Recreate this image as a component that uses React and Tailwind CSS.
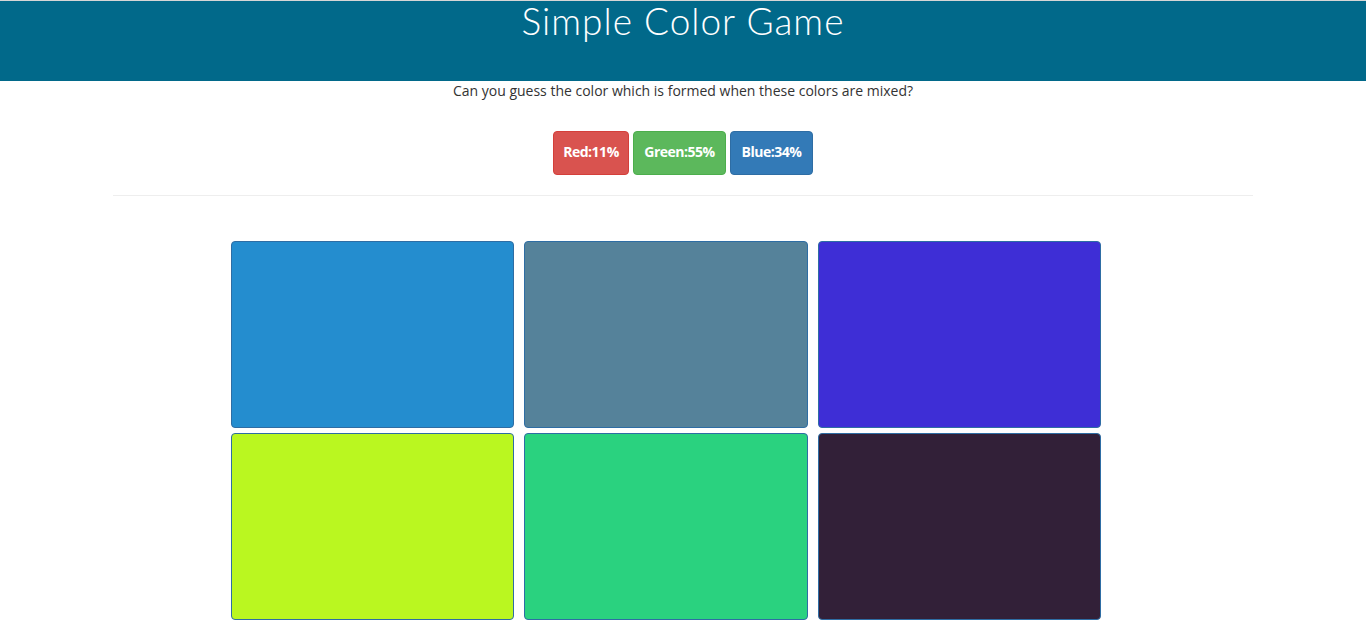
import React from "react";

const mix = [
  { label: "Red:11%", cls: "bg-[#d9534f] border-[#d43f3a] w-[76px]" },
  { label: "Green:55%", cls: "bg-[#5cb85c] border-[#4cae4c] w-[93px]" },
  { label: "Blue:34%", cls: "bg-[#337ab7] border-[#2e6da4] w-[83px]" },
];

const tiles = ["#248dcf", "#55829a", "#3e2ed6", "#baf720", "#2ad27f", "#322038"];

const App = () => {
  return (
    <div className="min-h-screen bg-white" style={{ fontFamily: "'Open Sans', sans-serif" }}>
      {/* Header */}
      <div className="border-t border-[#d6d6d6]">
        <header className="h-[80px] bg-[#01698a] text-center">
          <h1
            className="text-[37px] leading-[40px] font-light tracking-[1px] text-white"
            style={{ fontFamily: "Lato, sans-serif" }}
          >
            Simple Color Game
          </h1>
        </header>
      </div>

      <p className="text-center text-[14px] leading-[20px] text-[#333]">
        Can you guess the color which is formed when these colors are mixed?
      </p>

      {/* Mix buttons */}
      <div className="mt-[30px] flex justify-center gap-[4px]">
        {mix.map((m) => (
          <button
            key={m.label}
            className={`h-[44px] rounded-[4px] border pb-[4px] text-[14px] font-bold tracking-[-0.5px] text-white ${m.cls}`}
          >
            {m.label}
          </button>
        ))}
      </div>

      <hr className="mx-[113px] mt-[20px] border-t border-[#eeeeee]" />

      {/* Tiles */}
      <div className="ml-[231px] mt-[45px] grid grid-cols-[283px_284px_283px] gap-x-[10px] gap-y-[5px] pb-4">
        {tiles.map((c) => (
          <div
            key={c}
            className="h-[187px] rounded-[4px] border border-[#2e6da4]"
            style={{ backgroundColor: c }}
          />
        ))}
      </div>
    </div>
  );
};

export default App;
